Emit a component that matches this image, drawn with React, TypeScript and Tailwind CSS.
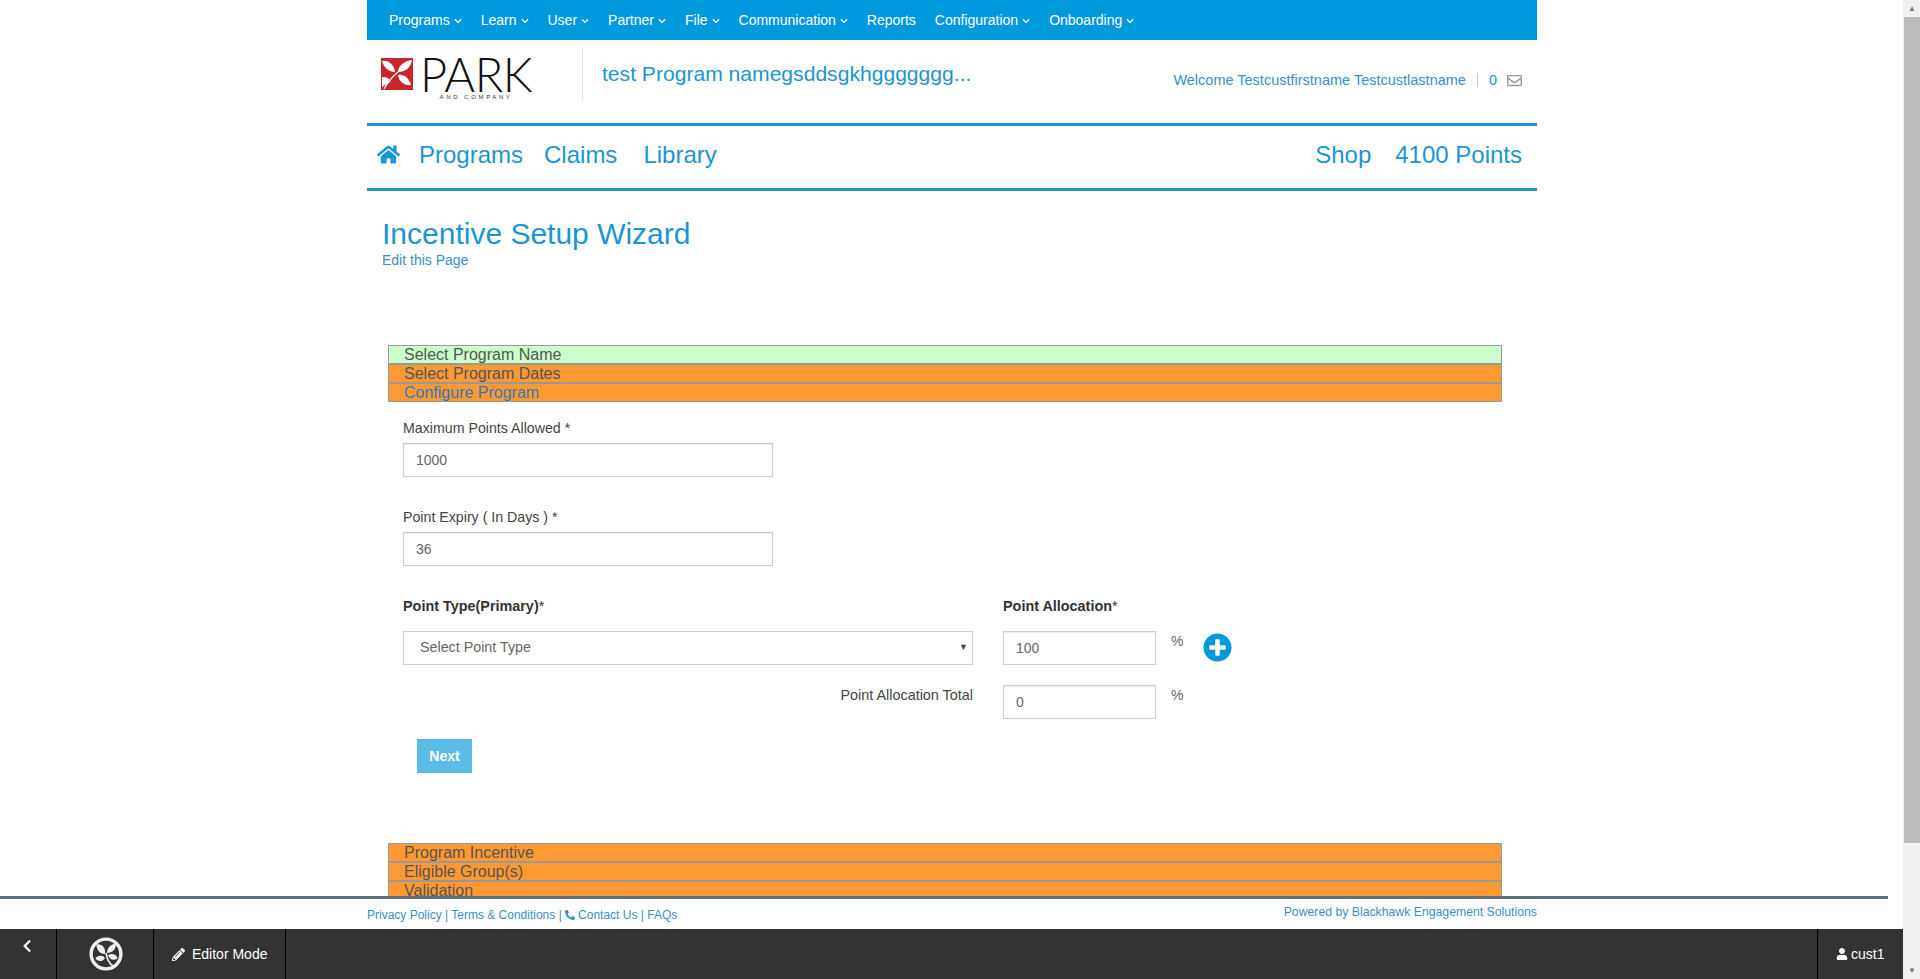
import {
  FaChevronDown,
  FaChevronLeft,
  FaHome,
  FaPencilAlt,
  FaPhoneAlt,
  FaPlusCircle,
  FaRegEnvelope,
  FaUser,
} from 'react-icons/fa';

const menu = [
  { label: 'Programs', arrow: true },
  { label: 'Learn', arrow: true },
  { label: 'User', arrow: true },
  { label: 'Partner', arrow: true },
  { label: 'File', arrow: true },
  { label: 'Communication', arrow: true },
  { label: 'Reports', arrow: false },
  { label: 'Configuration', arrow: true },
  { label: 'Onboarding', arrow: true },
];

function ParkMark() {
  return (
    <svg width="32" height="32" viewBox="0 0 32 32" className="shrink-0">
      <rect width="32" height="32" fill="#c9252b" />
      <path d="M1 3 C7 2 13 6 14 14 C8 14 3 10 1 3Z" fill="#fff" />
      <path d="M31 2 C30 9 25 14 17 14 C17 8 23 3 31 2Z" fill="#fff" />
      <path d="M17 17 C23 16 28 20 30 27 C24 28 18 24 17 17Z" fill="#fff" />
      <path d="M3 31 C7 24 12 18 17 14" fill="none" stroke="#fff" strokeWidth="1.2" />
      <path d="M1 29 L1 19 C6 19 9 21 10 23 C7 25 4 27 1 29Z" fill="#fff" />
    </svg>
  );
}

function FooterLogo() {
  return (
    <svg width="34" height="34" viewBox="0 0 32 32">
      <circle cx="16" cy="16" r="14" fill="none" stroke="#eee" strokeWidth="3.2" />
      <path d="M7 7 C12 6 16 10 15 16 C10 16 7 12 7 7Z" fill="#eee" />
      <path d="M25 6 C26 11 22 15 17 15 C17 10 20 7 25 6Z" fill="#eee" />
      <path d="M18 17 C21 15 26 16 27 20 C23 23 19 21 18 17Z" fill="#eee" />
      <path d="M6 20 C9 17 13 17 15 20 C12 24 8 23 6 20Z" fill="#eee" />
      <path d="M16 15 C17 20 18 25 24 28" fill="none" stroke="#eee" strokeWidth="1.6" />
    </svg>
  );
}

function StepRow({ label, tone, link }: { label: string; tone: 'green' | 'orange'; link?: boolean }) {
  return (
    <div
      className={`h-[19px] overflow-hidden border border-[#999] pl-[15px] text-[16px] leading-[17px] ${
        tone === 'green' ? 'bg-[#ccffcc]' : 'bg-[#ff9933]'
      } ${link ? 'text-[#337ab7]' : 'text-[#555]'}`}
    >
      {label}
    </div>
  );
}

function TextInput({ value, className }: { value: string; className: string }) {
  return (
    <div
      className={`flex h-[34px] items-center border border-[#ccc] bg-white px-[12px] text-[14px] text-[#666] shadow-[inset_0_1px_1px_rgba(0,0,0,0.075)] ${className}`}
    >
      {value}
    </div>
  );
}

export default function App() {
  return (
    <div className="flex h-screen overflow-hidden bg-white font-['Liberation_Sans',Arial,sans-serif] text-[14px] text-[#444]">
      <div className="relative min-w-0 flex-1 overflow-hidden">
        <div className="ml-[367px] w-[1170px]">
          {/* top menu */}
          <div className="flex h-[40px] items-center gap-[19px] bg-[#0099dd] pl-[22px] text-white">
            {menu.map((item) => (
              <span key={item.label} className="flex items-center gap-[4px] whitespace-nowrap">
                {item.label}
                {item.arrow && <FaChevronDown className="mt-[2px] text-[8px]" />}
              </span>
            ))}
          </div>

          {/* logo row */}
          <div className="flex h-[83px] items-start">
            <div className="mt-[18px] ml-[14px] flex w-[201px] shrink-0 items-start">
              <ParkMark />
              <div className="ml-[7px] flex flex-col items-center">
                <span className="font-['Lato',sans-serif] text-[47px] leading-[32px] font-light tracking-[-0.5px] text-[#111]">
                  PARK
                </span>
                <span className="mt-[4px] text-[6px] leading-[7px] tracking-[2.6px] text-[#333]">
                  AND COMPANY
                </span>
              </div>
            </div>
            <div className="mt-[8px] h-[52px] w-px bg-[#ddd]" />
            <div className="mt-[20px] ml-[19px] w-[375px] truncate text-[21.1px] leading-[28px] text-[#1b95d3]">
              test Program namegsddsgkhggggggg...
            </div>
            <div className="mt-[31px] mr-[15px] ml-auto flex items-center text-[14.5px] leading-[18px] text-[#3a8fc7]">
              <span>Welcome Testcustfirstname Testcustlastname</span>
              <span className="mx-[11px] h-[14px] w-px bg-[#a9cfe6]" />
              <span>0</span>
              <FaRegEnvelope className="ml-[10px] text-[15px] text-[#999]" />
            </div>
          </div>

          {/* main nav */}
          <div className="flex h-[68px] items-center border-y-[3px] border-[#1b94cb] pr-[15px] pb-[4px] pl-[10px] text-[24px] text-[#1b95d3]">
            <FaHome className="mr-[19px] mb-[2px] text-[#1b95d3]" size={23} />
            <span>Programs</span>
            <span className="ml-[21px]">Claims</span>
            <span className="ml-[26px]">Library</span>
            <span className="ml-auto">Shop</span>
            <span className="ml-[24px]">4100 Points</span>
          </div>

          {/* heading */}
          <div className="pt-[26px] pl-[15px]">
            <h1 className="text-[30px] leading-[34px] text-[#1b95d3]">Incentive Setup Wizard</h1>
            <div className="text-[14px] leading-[18px] text-[#3a8fc7]">Edit this Page</div>
          </div>

          {/* wizard */}
          <div className="mt-[76px] mr-[35px] ml-[21px]">
            <StepRow label="Select Program Name" tone="green" />
            <StepRow label="Select Program Dates" tone="orange" />
            <StepRow label="Configure Program" tone="orange" link />

            <div className="pl-[15px]">
              <div className="mt-[17px] text-[14.2px] leading-[18px]">Maximum Points Allowed *</div>
              <TextInput value="1000" className="mt-[6px] w-[370px]" />
              <div className="mt-[31px] text-[14.2px] leading-[18px]">Point Expiry ( In Days ) *</div>
              <TextInput value="36" className="mt-[6px] w-[370px]" />

              <div className="mt-[31px] flex text-[14.4px] text-[#333]">
                <div className="w-[570px] font-bold leading-[18px]">
                  Point Type(Primary)<span className="font-normal">*</span>
                </div>
                <div className="ml-[30px] font-bold leading-[18px]">
                  Point Allocation<span className="font-normal">*</span>
                </div>
              </div>

              <div className="mt-[16px] flex">
                <div className="flex h-[34px] w-[570px] items-center justify-between border border-[#ccc] pr-[4px] pl-[16px] text-[14.3px] text-[#666]">
                  <span>Select Point Type</span>
                  <span className="text-[9px] text-[#444]">▼</span>
                </div>
                <TextInput value="100" className="ml-[30px] w-[153px]" />
                <span className="mt-[1px] ml-[15px] leading-[18px] text-[#666]">%</span>
                <FaPlusCircle className="mt-[2px] ml-[20px] text-[#0099dd]" size={29} />
              </div>

              <div className="mt-[20px] flex">
                <div className="w-[570px] pt-[1px] text-right text-[14.4px] leading-[18px]">Point Allocation Total</div>
                <TextInput value="0" className="ml-[30px] w-[153px]" />
                <span className="mt-[1px] ml-[15px] leading-[18px] text-[#666]">%</span>
              </div>

              <div className="mt-[20px] ml-[14px] flex h-[34px] w-[55px] items-center justify-center bg-[#5bbce8] font-bold text-white">
                Next
              </div>
            </div>

            <div className="mt-[70px]">
              <StepRow label="Program Incentive" tone="orange" />
              <StepRow label="Eligible Group(s)" tone="orange" />
              <StepRow label="Validation" tone="orange" />
            </div>
          </div>
        </div>

        {/* fixed footer */}
        <div className="absolute right-0 bottom-0 left-0 bg-white">
          <div className="mr-[15px] h-[3px] bg-[#5f717f]" />
          <div className="ml-[367px] flex h-[30px] w-[1170px] justify-between text-[12px] text-[#3a8fc7]">
            <div className="flex items-center whitespace-pre pt-[2px]">
              Privacy Policy | Terms &amp; Conditions | <FaPhoneAlt className="mr-[3px] text-[10px]" />
              Contact Us | FAQs
            </div>
            <div className="pt-[6px] text-[12.25px] leading-[14px]">Powered by Blackhawk Engagement Solutions</div>
          </div>
          <div className="flex h-[50px] bg-[#333] text-white">
            <div className="flex w-[57px] justify-center border-r border-black pt-[10px]">
              <FaChevronLeft className="mr-[2px] text-[14px]" />
            </div>
            <div className="flex w-[97px] items-center justify-center border-r border-black pl-[2px]">
              <FooterLogo />
            </div>
            <div className="flex w-[132px] items-center border-r border-black pl-[18px]">
              <FaPencilAlt className="mr-[7px] text-[13px]" />
              Editor Mode
            </div>
            <div className="ml-auto flex w-[86px] items-center border-l border-black pl-[18px]">
              <FaUser className="mr-[3px] text-[12px]" />
              cust1
            </div>
          </div>
        </div>
      </div>

      {/* scrollbar */}
      <div className="flex w-[17px] shrink-0 flex-col items-center bg-[#f1f1f1] pl-[1px] text-[#777]">
        <div className="flex h-[17px] items-center text-[8px]">▲</div>
        <div className="h-[826px] w-full bg-[#bcbcbc]" />
        <div className="mt-auto flex h-[17px] items-center text-[8px]">▼</div>
      </div>
    </div>
  );
}
